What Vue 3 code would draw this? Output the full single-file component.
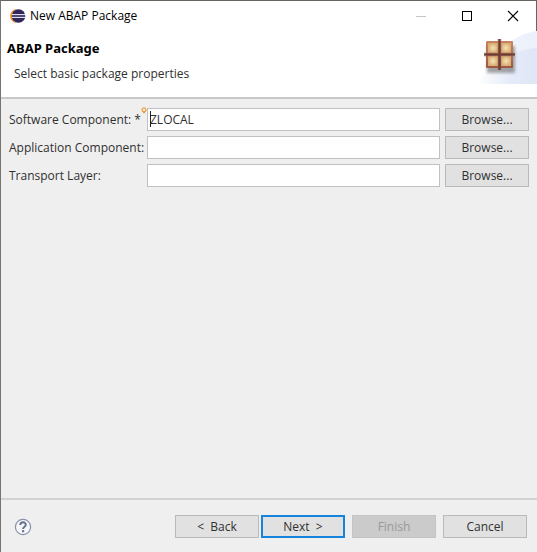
<script setup>
import { reactive } from 'vue'

const fields = reactive([
  { id: 'software', label: 'Software Component: *', value: 'ZLOCAL', hint: true },
  { id: 'application', label: 'Application Component:', value: '', hint: false },
  { id: 'transport', label: 'Transport Layer:', value: '', hint: false },
])
</script>

<template>
  <main class="dialog">
    <div class="titlebar">
      <svg class="app-icon" width="16" height="14" viewBox="0 0 16 14">
        <path d="M7 0A7 7 0 0 0 7 14A8 8 0 0 1 7 0Z" fill="#f39a32" />
        <circle cx="8.5" cy="7" r="6.8" fill="#30275d" />
        <path d="M2 5.5H15M2 8.5H15" stroke="#dedeea" />
        <path d="M2 7H15" stroke="#6f6a98" />
      </svg>
      <span class="caption">New ABAP Package</span>
      <button class="window-button" aria-label="Minimize" disabled>
        <svg width="12" height="12"><path d="M1 6.5H11" stroke="#c5c5c5" /></svg>
      </button>
      <button class="window-button" aria-label="Maximize">
        <svg width="12" height="12"><rect x="1.5" y="1.5" width="9" height="9" fill="none" stroke="#000" /></svg>
      </button>
      <button class="window-button" aria-label="Close">
        <svg width="12" height="12"><path d="M1 1L11 11M11 1L1 11" stroke="#000" stroke-width="1.1" /></svg>
      </button>
    </div>

    <header class="banner">
      <div class="heading">
        <h1>ABAP Package</h1>
        <p>Select basic package properties</p>
      </div>
      <svg class="banner-art" width="62" height="54" viewBox="0 0 62 54">
        <defs>
          <linearGradient id="sweep" x1="0" y1="0" x2="1" y2="0">
            <stop offset="0" stop-color="#fff" />
            <stop offset=".55" stop-color="#e5ebf9" />
            <stop offset="1" stop-color="#dfe6f7" />
          </linearGradient>
          <linearGradient id="frame" x1="0" y1="0" x2="0" y2="1">
            <stop offset="0" stop-color="#c98560" />
            <stop offset="1" stop-color="#9d5843" />
          </linearGradient>
          <radialGradient id="pane">
            <stop offset="0" stop-color="#f5e4b4" />
            <stop offset="1" stop-color="#d9ad75" />
          </radialGradient>
          <filter id="soft" x="-30%" y="-30%" width="160%" height="160%">
            <feGaussianBlur stdDeviation="1.8" />
          </filter>
        </defs>
        <path d="M2 53C15 24 35 4 62 0V53Z" fill="url(#sweep)" opacity=".6" />
        <path d="M2 53C18 31 36 19 62 17V53Z" fill="url(#sweep)" />
        <rect x="12" y="15" width="28" height="27" fill="#777" opacity=".65" filter="url(#soft)" />
        <rect x="11" y="10" width="27" height="27" rx="1" fill="url(#frame)" />
        <g fill="url(#pane)">
          <rect x="13" y="12" width="10" height="10" />
          <rect x="26" y="12" width="10" height="10" />
          <rect x="13" y="25" width="10" height="10" />
          <rect x="26" y="25" width="10" height="10" />
        </g>
        <path d="M24.5 8V39M9 23.5H40" stroke="#a66b4d" stroke-width="4" opacity=".45" />
        <path d="M24.5 8V39M9 23.5H40" stroke="#6a3d37" stroke-width="2.2" />
      </svg>
    </header>

    <form class="content" @submit.prevent>
      <template v-for="field in fields" :key="field.id">
        <label :for="field.id">{{ field.label }}</label>
        <div class="entry">
          <svg v-if="field.hint" class="hint" width="6" height="8" viewBox="0 0 6 8">
            <circle cx="3" cy="2.7" r="1.9" fill="#fff0c4" stroke="#eaa04b" stroke-width="1.2" />
            <path d="M2 5.5H4" stroke="#d99a55" stroke-width="1.6" />
          </svg>
          <input :id="field.id" v-model="field.value" type="text" autocomplete="off" />
          <span v-if="field.hint" class="caret"></span>
        </div>
        <button type="button" class="push">Browse...</button>
      </template>
    </form>

    <footer class="actions">
      <button class="help" aria-label="Help">
        <svg width="18" height="18" viewBox="0 0 18 18" fill="none">
          <circle cx="9" cy="9" r="7.6" fill="#f6f7fa" stroke="#8793ac" stroke-width="1.2" />
          <path d="M6.3 7C6.3 3.4 11.8 3.5 11.8 6.7C11.8 8.8 9.1 8.6 9.1 11" stroke="#63718f" stroke-width="1.9" />
          <path d="M8 12.2H10.2V14.2H8Z" fill="#63718f" />
        </svg>
      </button>
      <div class="pair">
        <button class="push">&lt;&nbsp; Back</button>
        <button class="push primary">Next &nbsp;&gt;</button>
      </div>
      <button class="push" disabled>Finish</button>
      <button class="push">Cancel</button>
    </footer>
  </main>
</template>

<style>
body {
  margin: 0;
}
</style>

<style scoped>
.dialog {
  box-sizing: border-box;
  min-height: 100vh;
  display: flex;
  flex-direction: column;
  border-top: 1px solid #686460;
  border-left: 1px solid #77736f;
  background: #efefef;
  color: #303030;
  font: 12px/16px "Open Sans", "Noto Sans", sans-serif;
}
button,
input {
  box-sizing: border-box;
  margin: 0;
  font: inherit;
  color: inherit;
}
.titlebar {
  height: 30px;
  display: flex;
  align-items: center;
  padding-left: 9px;
  border-right: 1px solid #686460;
  background: #fff;
  color: #000;
}
.caption {
  flex: 1;
  margin-left: 4px;
  white-space: nowrap;
}
.window-button {
  width: 46px;
  height: 30px;
  padding: 0;
  border: 0;
  background: none;
  display: flex;
  align-items: center;
  justify-content: center;
}
.banner {
  display: flex;
  justify-content: space-between;
  height: 66px;
  background: #fff;
  border-bottom: 2px solid #c9c9c9;
}
.heading {
  padding: 8px 6px;
}
h1 {
  margin: 0;
  color: #000;
  font: bold 13px/18px "Noto Sans", "Open Sans", sans-serif;
}
p {
  margin: 9px 0 0 7px;
}
.content {
  flex: 1;
  display: grid;
  grid-template-columns: 133px 1fr 84px;
  column-gap: 5px;
  row-gap: 5px;
  align-content: start;
  align-items: center;
  padding: 9px 8px;
}
label {
  white-space: nowrap;
}
.entry {
  position: relative;
  display: flex;
}
.entry input {
  width: 100%;
  height: 23px;
  padding: 0 2px;
  border: 1px solid #bfc1c4;
  background: #fff;
  outline: none;
}
.hint {
  position: absolute;
  left: -6px;
  top: -1px;
}
.caret {
  position: absolute;
  left: 3px;
  top: 3px;
  width: 1px;
  height: 16px;
  background: #222;
}
.push {
  width: 84px;
  height: 23px;
  padding: 0;
  border: 1px solid #bababa;
  background: #e1e1e1;
  white-space: nowrap;
}
.push:disabled {
  border-color: #c4c4c4;
  background: #cbcbcb;
  color: #999;
}
.primary {
  border: 2px solid #1683dc;
}
.actions {
  display: flex;
  align-items: center;
  gap: 7px;
  padding: 15px 10px 14px 13px;
  border-top: 2px solid #d2d2d2;
}
.help {
  width: 18px;
  height: 18px;
  margin-right: auto;
  padding: 0;
  border: 0;
  background: none;
  display: flex;
}
.pair {
  display: flex;
  gap: 2px;
}
</style>
